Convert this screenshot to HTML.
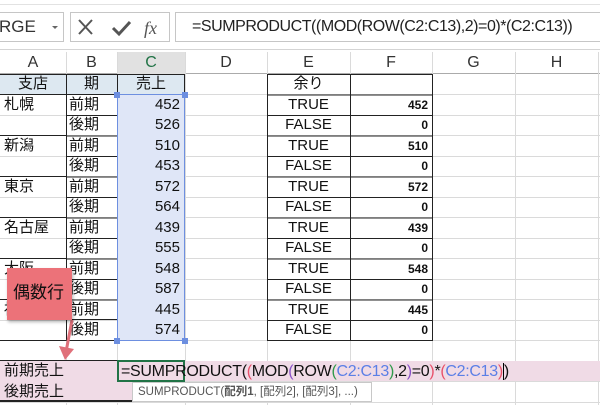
<!DOCTYPE html><html><head><meta charset="utf-8"><style>
body{margin:0;width:600px;height:405px;overflow:hidden;background:#fff;position:relative;font-family:"Liberation Sans","Noto Sans CJK JP",sans-serif}
.a{position:absolute;box-sizing:border-box}
.c{position:absolute;box-sizing:border-box;height:20.5px;line-height:20px;font-size:15px;color:#111;white-space:nowrap;overflow:hidden}
.vl{position:absolute;top:52px;width:1px;height:353px;background:#dadada}
.hl{position:absolute;left:0;width:600px;height:1px;background:#dadada}
.ch{position:absolute;top:52px;height:22px;line-height:22px;text-align:center;font-size:16px;color:#333;border-right:1px solid #d0d0d0}
.r{text-align:right;padding-right:5px}
.m{text-align:center}
.f{text-align:right;padding-right:4px;font-size:12px;font-weight:bold}
</style></head><body>
<div class="a" style="left:0;top:0;width:600px;height:50px;background:#fff;border-bottom:1px solid #d4d4d4"></div>
<div class="a" style="left:0;top:4px;width:600px;height:1px;background:#e2e2e2"></div>
<div class="a" style="left:-2px;top:12px;width:66px;height:30px;border:1px solid #c6c6c6;font-size:17px;line-height:28px;color:#333">RGE</div>
<div class="a" style="left:52px;top:26px;width:0;height:0;border-left:3px solid transparent;border-right:3px solid transparent;border-top:3px solid #666"></div>
<div class="a" style="left:70px;top:12px;width:100px;height:30px;border:1px solid #c6c6c6"></div>
<svg class="a" style="left:70px;top:12px" width="100" height="30"><path d="M9 8 L22 22 M22 8 L9 22" stroke="#555" stroke-width="2"/><path d="M43 16 L49 22 L60 10" stroke="#555" stroke-width="3" fill="none"/><text x="74" y="22" font-family="Liberation Serif,serif" font-style="italic" font-size="18" fill="#555">fx</text></svg>
<div class="a" style="left:175px;top:12px;width:430px;height:30px;border:1px solid #c6c6c6;font-size:16px;letter-spacing:-0.45px;line-height:28px;padding-left:16px;color:#222;white-space:nowrap">=SUMPRODUCT((MOD(ROW(C2:C13),2)=0)*(C2:C13))</div>
<div class="a" style="left:0;top:52px;width:600px;height:22px;background:#fff;border-bottom:1px solid #ababab"></div>
<div class="ch" style="left:0;width:66px">A</div>
<div class="ch" style="left:66px;width:51px">B</div>
<div class="ch" style="left:117px;width:68px;background:#e1e1e1;color:#217346;border-bottom:2px solid #217346;height:22px">C</div>
<div class="ch" style="left:185px;width:82px">D</div>
<div class="ch" style="left:267px;width:83px">E</div>
<div class="ch" style="left:350px;width:82px">F</div>
<div class="ch" style="left:432px;width:83px">G</div>
<div class="ch" style="left:515px;width:83px">H</div>
<div class="vl" style="left:66px"></div><div class="vl" style="left:117px"></div><div class="vl" style="left:185px"></div><div class="vl" style="left:267px"></div><div class="vl" style="left:350px"></div><div class="vl" style="left:432px"></div><div class="vl" style="left:515px"></div><div class="vl" style="left:598px"></div>
<div class="hl" style="top:94px"></div><div class="hl" style="top:114.5px"></div><div class="hl" style="top:135px"></div><div class="hl" style="top:155.5px"></div><div class="hl" style="top:176px"></div><div class="hl" style="top:196.5px"></div><div class="hl" style="top:217px"></div><div class="hl" style="top:237.5px"></div><div class="hl" style="top:258px"></div><div class="hl" style="top:278.5px"></div><div class="hl" style="top:299px"></div><div class="hl" style="top:319.5px"></div><div class="hl" style="top:340px"></div><div class="hl" style="top:360.5px"></div><div class="hl" style="top:381px"></div><div class="hl" style="top:401.5px"></div>
<div class="a" style="left:0;top:74px;width:185px;height:21px;background:#dde8f1"></div>
<div class="a" style="left:117px;top:95px;width:68px;height:246px;background:#dfe6f7"></div>
<div class="a" style="left:-1px;top:74px;width:186px;height:267px;border:1px solid #222;border-left:none"></div>
<div class="a" style="left:66px;top:74px;width:1px;height:267px;background:#222"></div>
<div class="a" style="left:117px;top:74px;width:1px;height:267px;background:#222"></div>
<div class="a" style="left:0;top:94px;width:185px;height:1px;background:#222"></div>
<div class="a" style="left:0;top:135px;width:66px;height:1px;background:#222"></div>
<div class="a" style="left:0;top:176px;width:66px;height:1px;background:#222"></div>
<div class="a" style="left:0;top:217px;width:66px;height:1px;background:#222"></div>
<div class="a" style="left:0;top:258px;width:66px;height:1px;background:#222"></div>
<div class="a" style="left:0;top:299px;width:66px;height:1px;background:#222"></div>
<div class="a" style="left:66px;top:114.5px;width:51px;height:205px;border-top:1px solid #222;border-bottom:1px solid #222;background:repeating-linear-gradient(#0000 0 19.5px,#222 19.5px 20.5px)"></div>
<div class="a" style="left:117px;top:94px;width:68px;height:247px;border:1.5px solid #6d8fe0"></div>
<div class="a" style="left:114px;top:92px;width:6px;height:6px;background:#6d8fe0"></div>
<div class="a" style="left:182px;top:92px;width:6px;height:6px;background:#6d8fe0"></div>
<div class="a" style="left:114px;top:338px;width:6px;height:6px;background:#6d8fe0"></div>
<div class="a" style="left:182px;top:338px;width:6px;height:6px;background:#6d8fe0"></div>
<div class="a" style="left:267px;top:74px;width:166px;height:267px;border:1px solid #222;background:repeating-linear-gradient(#0000 0 19.5px,#222 19.5px 20.5px)"></div>
<div class="a" style="left:350px;top:74px;width:1px;height:267px;background:#222"></div>
<div class="c m" style="left:0;top:74px;width:66px">支店</div><div class="c m" style="left:66px;top:74px;width:51px">期</div><div class="c m" style="left:117px;top:74px;width:68px">売上</div><div class="c m" style="left:267px;top:74px;width:83px">余り</div>
<div class="c" style="left:4px;top:94.5px">札幌</div><div class="c" style="left:4px;top:135.5px">新潟</div><div class="c" style="left:4px;top:176.5px">東京</div><div class="c" style="left:4px;top:217.5px">名古屋</div><div class="c" style="left:4px;top:258.5px">大阪</div><div class="c" style="left:4px;top:299.5px">福岡</div>
<div class="c" style="left:69px;top:94.5px">前期</div><div class="c" style="left:69px;top:115px">後期</div><div class="c" style="left:69px;top:135.5px">前期</div><div class="c" style="left:69px;top:156px">後期</div><div class="c" style="left:69px;top:176.5px">前期</div><div class="c" style="left:69px;top:197px">後期</div><div class="c" style="left:69px;top:217.5px">前期</div><div class="c" style="left:69px;top:238px">後期</div><div class="c" style="left:69px;top:258.5px">前期</div><div class="c" style="left:69px;top:279px">後期</div><div class="c" style="left:69px;top:299.5px">前期</div><div class="c" style="left:69px;top:320px">後期</div>
<div class="c r" style="left:117px;width:68px;top:94.5px">452</div><div class="c r" style="left:117px;width:68px;top:115px">526</div><div class="c r" style="left:117px;width:68px;top:135.5px">510</div><div class="c r" style="left:117px;width:68px;top:156px">453</div><div class="c r" style="left:117px;width:68px;top:176.5px">572</div><div class="c r" style="left:117px;width:68px;top:197px">564</div><div class="c r" style="left:117px;width:68px;top:217.5px">439</div><div class="c r" style="left:117px;width:68px;top:238px">555</div><div class="c r" style="left:117px;width:68px;top:258.5px">548</div><div class="c r" style="left:117px;width:68px;top:279px">587</div><div class="c r" style="left:117px;width:68px;top:299.5px">445</div><div class="c r" style="left:117px;width:68px;top:320px">574</div>
<div class="c m" style="left:267px;width:83px;top:94.5px">TRUE</div><div class="c m" style="left:267px;width:83px;top:115px">FALSE</div><div class="c m" style="left:267px;width:83px;top:135.5px">TRUE</div><div class="c m" style="left:267px;width:83px;top:156px">FALSE</div><div class="c m" style="left:267px;width:83px;top:176.5px">TRUE</div><div class="c m" style="left:267px;width:83px;top:197px">FALSE</div><div class="c m" style="left:267px;width:83px;top:217.5px">TRUE</div><div class="c m" style="left:267px;width:83px;top:238px">FALSE</div><div class="c m" style="left:267px;width:83px;top:258.5px">TRUE</div><div class="c m" style="left:267px;width:83px;top:279px">FALSE</div><div class="c m" style="left:267px;width:83px;top:299.5px">TRUE</div><div class="c m" style="left:267px;width:83px;top:320px">FALSE</div>
<div class="c f" style="left:350px;width:82px;top:94.5px">452</div><div class="c f" style="left:350px;width:82px;top:115px">0</div><div class="c f" style="left:350px;width:82px;top:135.5px">510</div><div class="c f" style="left:350px;width:82px;top:156px">0</div><div class="c f" style="left:350px;width:82px;top:176.5px">572</div><div class="c f" style="left:350px;width:82px;top:197px">0</div><div class="c f" style="left:350px;width:82px;top:217.5px">439</div><div class="c f" style="left:350px;width:82px;top:238px">0</div><div class="c f" style="left:350px;width:82px;top:258.5px">548</div><div class="c f" style="left:350px;width:82px;top:279px">0</div><div class="c f" style="left:350px;width:82px;top:299.5px">445</div><div class="c f" style="left:350px;width:82px;top:320px">0</div>
<div class="a" style="left:0;top:361px;width:600px;height:20px;background:#f0dbe6"></div>
<div class="a" style="left:0;top:381px;width:185px;height:21px;background:#f0dbe6;border-bottom:2px solid #222"></div>
<div class="a" style="left:0;top:360px;width:185px;height:1px;background:#222"></div>
<div class="a" style="left:117px;top:360px;width:68px;height:22px;border:2px solid #217346"></div>
<div class="c" style="left:4px;top:361px">前期売上</div>
<div class="c" style="left:4px;top:381.5px">後期売上</div>
<div class="c" style="left:121px;top:361px;font-size:16px;letter-spacing:-0.3px;line-height:21px;overflow:visible;color:#111">=SUMPRODUCT(<span style="color:#e8506a">(</span>MOD<span style="color:#8a52c8">(</span>ROW<span style="color:#2f9a4a">(</span><span style="color:#5b7fe6">C2:C13</span><span style="color:#2f9a4a">)</span>,2<span style="color:#8a52c8">)</span>=0<span style="color:#e8506a">)</span>*<span style="color:#e8506a">(</span><span style="color:#5b7fe6">C2:C13</span><span style="color:#e8506a">)</span><span style="border-left:1px solid #000">)</span></div>
<div class="a" style="left:132px;top:382px;width:240px;height:20px;background:#fff;border:1px solid #c8c8c8;font-size:11.5px;line-height:18px;padding-left:5px;color:#555;white-space:nowrap">SUMPRODUCT(<b>配列1</b>, [配列2], [配列3], ...)</div>
<svg class="a" style="left:55px;top:318px" width="30" height="45"><path d="M17 2 L11 34" stroke="#e0707a" stroke-width="3" fill="none"/><path d="M4 28 L10 42 L19 31 Z" fill="#e0707a"/></svg>
<div class="a" style="left:7px;top:268px;width:65px;height:52px;background:#ec7279;box-shadow:1px 2px 3px rgba(0,0,0,.3);font-size:17px;line-height:50px;padding-left:6px;color:#111">偶数行</div>
</body></html>
